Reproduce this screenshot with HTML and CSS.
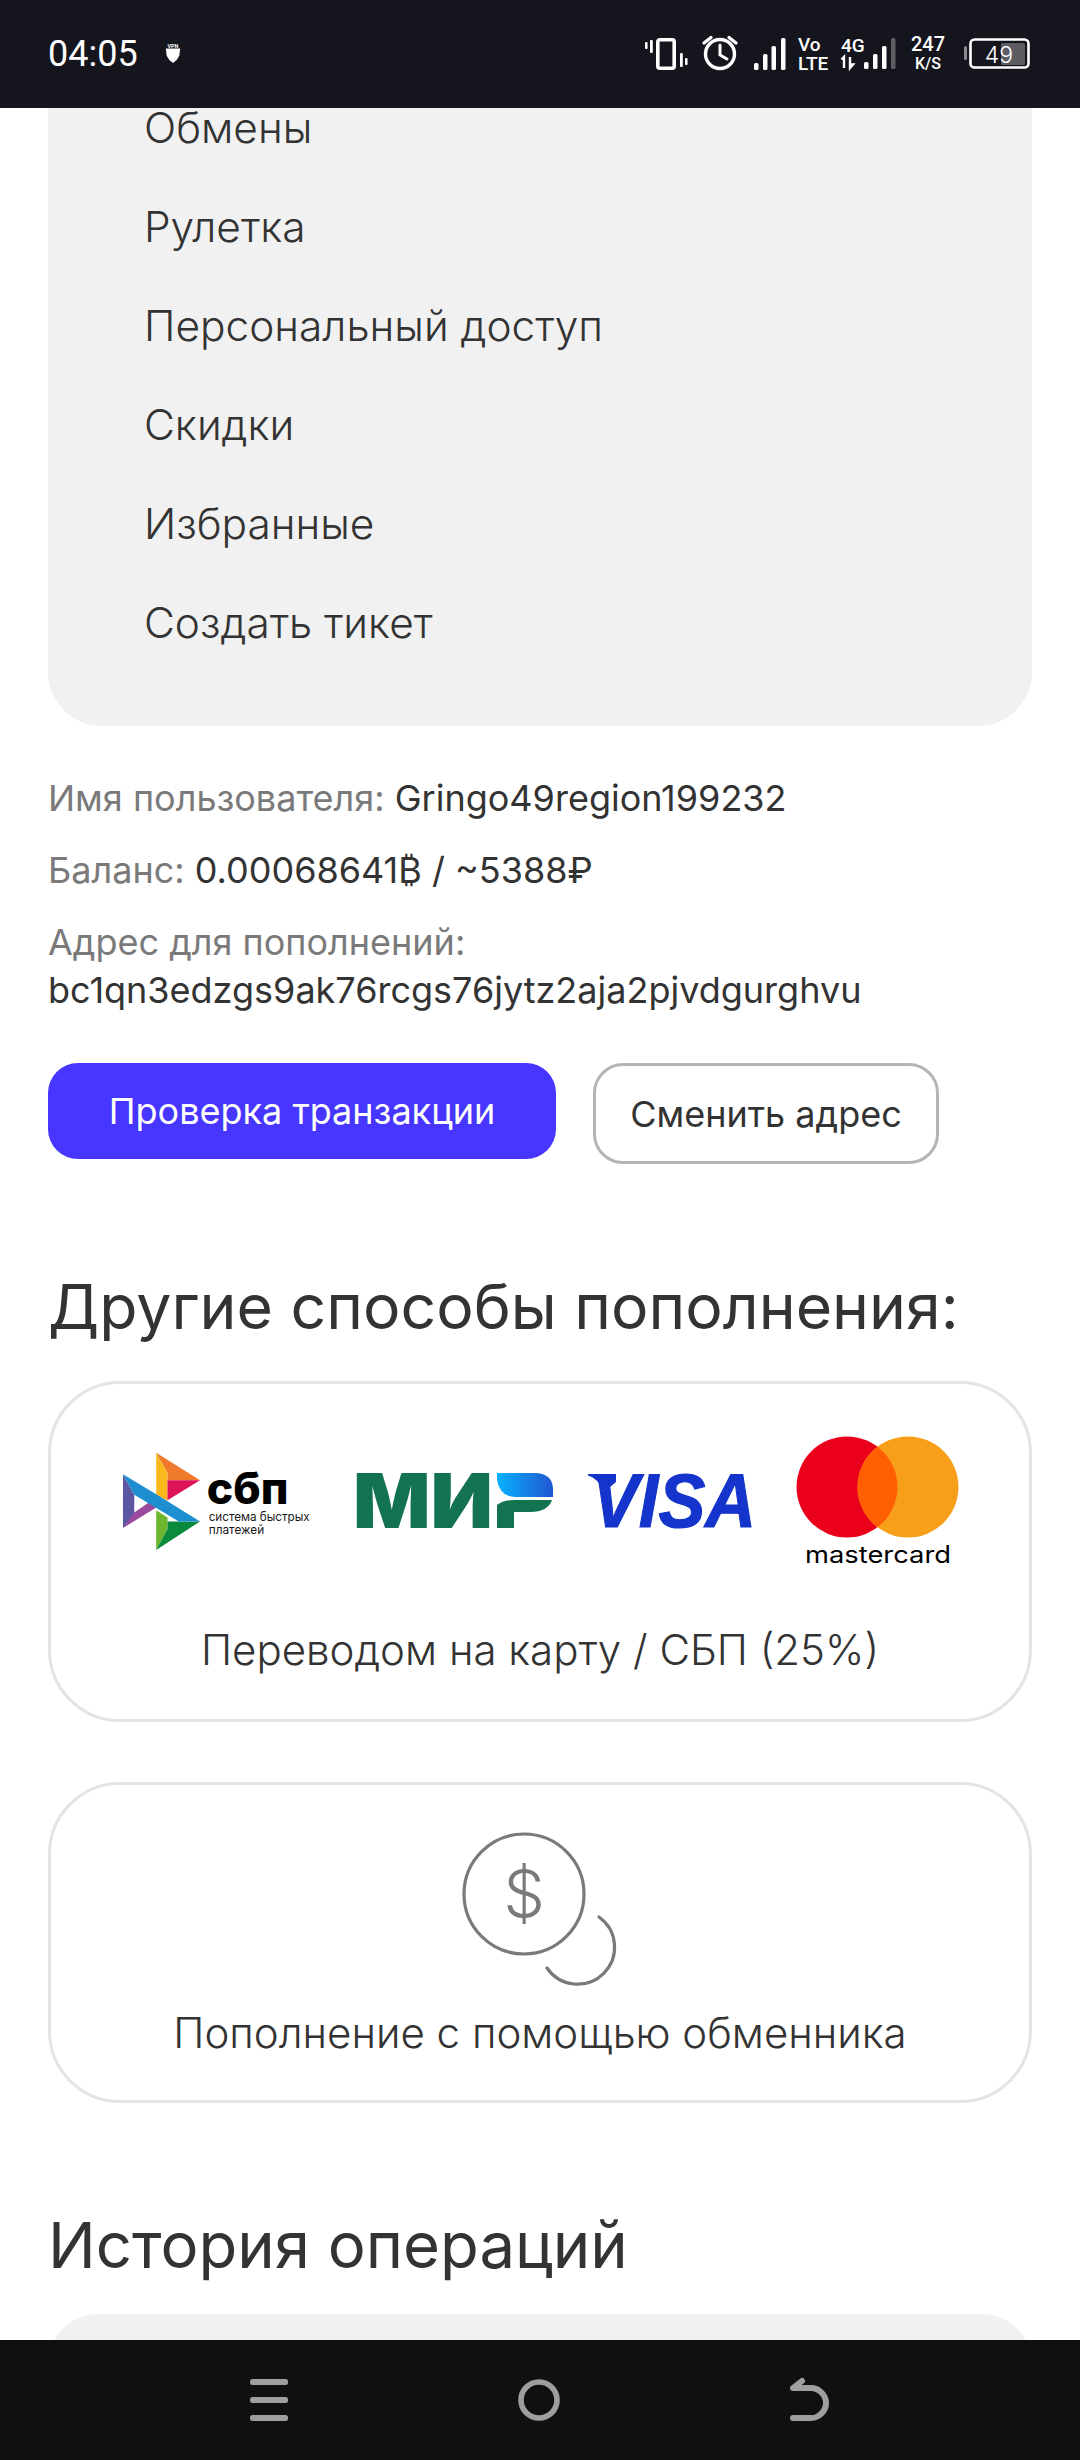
FILE: index.html
```html
<!DOCTYPE html>
<html lang="ru">
  <head>
    <meta charset="UTF-8" />
    <meta name="viewport" content="width=device-width, initial-scale=1.0" />
    <title>Профиль</title>
    <link rel="stylesheet" href="styles.css">
  </head>

  <body>
    <div class="screen">
      <header class="status-bar">
        <div class="status-left">
          <span class="time">04:05</span>
          <svg class="vpn" width="18" height="20" viewBox="0 0 20 22">
            <text x="10" y="5" text-anchor="middle" class="vpn-text">VPN</text>
            <path d="M2 6 L18 6 L17 14 Q15 19 10 22 Q5 19 3 14 Z" fill="#fff"/>
          </svg>
        </div>
        <div class="status-right">
          <svg width="44" height="34" viewBox="0 0 44 34" fill="#fff">
            <rect x="13.8" y="2.8" width="16.4" height="28.4" rx="2" fill="none" stroke="#fff" stroke-width="3.6"/>
            <rect x="1" y="5" width="2.6" height="7" rx="1"/>
            <rect x="6" y="3" width="2.8" height="13" rx="1"/>
            <rect x="36" y="16" width="2.8" height="14" rx="1"/>
            <rect x="41" y="21" width="2.6" height="7" rx="1"/>
          </svg>
          <svg class="ic-alarm" width="36" height="38" viewBox="0 0 36 38" fill="none" stroke="#fff" stroke-width="3.4" stroke-linecap="round">
            <circle cx="18" cy="20" r="14.5"/>
            <path d="M18 11 V21 L25 25" stroke-width="3"/>
            <path d="M2 9 L9 3.5 M34 9 L27 3.5"/>
          </svg>
          <svg class="ic-signal" width="32" height="32" viewBox="0 0 32 32" fill="#fff">
            <rect x="0" y="25" width="4.5" height="7" rx="1.5"/>
            <rect x="9" y="16" width="4.5" height="16" rx="1.5"/>
            <rect x="17.5" y="8" width="4.5" height="24" rx="1.5"/>
            <rect x="27" y="0" width="4.5" height="32" rx="1.5"/>
          </svg>
          <span class="stack stack-volte"><b>Vo</b><b>LTE</b></span>
          <svg class="ic-net" width="56" height="34" viewBox="0 0 56 34" fill="#fff">
            <text x="0" y="15" class="net-text">4G</text>
            <path d="M3 31 V20 L0.5 22.5 M9 20 V31 L12 27.5 H9" fill="none" stroke="#fff" stroke-width="2.4"/>
            <rect x="23" y="25" width="4.5" height="7" rx="1.5"/>
            <rect x="32" y="17" width="4.5" height="15" rx="1.5"/>
            <rect x="41" y="9" width="4.5" height="23" rx="1.5"/>
            <rect x="50" y="1" width="4.5" height="31" rx="1.5" fill="#5c5c62"/>
          </svg>
          <span class="stack stack-speed"><b>247</b><b class="small">K/S</b></span>
          <svg class="ic-battery" width="66" height="32" viewBox="0 0 66 32">
            <rect x="0" y="8" width="3" height="14" rx="1.5" fill="#8a8a8e"/>
            <rect x="6.5" y="1.5" width="58" height="28" rx="4" fill="none" stroke="#fff" stroke-width="2.6"/>
            <rect x="37" y="5" width="24" height="22" rx="1.5" fill="#5c5c62"/>
            <text x="35" y="25" text-anchor="middle" class="battery-text">49</text>
          </svg>
        </div>
      </header>

      <main class="content">
        <nav class="menu">
          <a class="menu-item">Обмены</a>
          <a class="menu-item">Рулетка</a>
          <a class="menu-item">Персональный доступ</a>
          <a class="menu-item">Скидки</a>
          <a class="menu-item">Избранные</a>
          <a class="menu-item">Создать тикет</a>
        </nav>

        <section class="info">
          <p><span class="muted">Имя пользователя:</span> Gringo49region199232</p>
          <p><span class="muted">Баланс:</span> 0.00068641₿ / ~5388₽</p>
          <p><span class="muted">Адрес для пополнений:</span><br />bc1qn3edzgs9ak76rcgs76jytz2aja2pjvdgurghvu</p>
        </section>

        <div class="actions">
          <button class="btn btn-primary">Проверка транзакции</button>
          <button class="btn btn-outline">Сменить адрес</button>
        </div>

        <h2 class="title title-topup">Другие способы пополнения:</h2>

        <section class="card card-cards">
          <div class="logos">
            <svg width="200" height="103" viewBox="90 150 600 310">
              <polygon points="198,155 232,215 232,300 198,282" fill="#fbb81e"/>
              <polygon points="198,155 330,238 232,238 232,215" fill="#ef7a2b"/>
              <polygon points="330,238 232,298 232,238" fill="#de1259"/>
              <polygon points="98,220 132,282 132,340 98,382" fill="#5b57a2"/>
              <polygon points="98,382 198,320 180,302 132,335" fill="#9a4a9e"/>
              <polygon points="198,328 232,350 232,385 198,448" fill="#6cb62f"/>
              <polygon points="198,448 330,362 232,362 232,385" fill="#0a8a3c"/>
              <polygon points="98,220 198,280 330,362 266,362 132,282" fill="#1d8fd0"/>
              <text x="350" y="310" textLength="246" lengthAdjust="spacingAndGlyphs" class="sbp-main">сбп</text>
              <text x="356" y="362" textLength="304" lengthAdjust="spacingAndGlyphs" class="sbp-sub">система быстрых</text>
              <text x="356" y="400" textLength="167" lengthAdjust="spacingAndGlyphs" class="sbp-sub">платежей</text>
            </svg>
            <svg width="210" height="60" viewBox="350 1472 210 60">
              <defs>
                <linearGradient id="mirBlue" x1="0" y1="0" x2="1" y2="0">
                  <stop offset="0" stop-color="#0ab2ff"/>
                  <stop offset="1" stop-color="#1f56d0"/>
                </linearGradient>
              </defs>
              <text x="353" y="1528" textLength="140" lengthAdjust="spacingAndGlyphs" class="mir-text">МИ</text>
              <path d="M497 1473 H534 Q553 1473 553 1490 V1497 H515 Q500 1497 497 1480 Z" fill="url(#mirBlue)"/>
              <path d="M497 1528 V1505 Q503 1500 514 1500 H552 Q548 1512 530 1512 H514 V1528 Z" fill="#137350"/>
            </svg>
            <svg width="175" height="60" viewBox="582 1472 175 60">
              <path d="M588 1474 H616 V1482 L604 1492 Q598 1478 588 1475.5 Z" fill="#1434cb"/>
              <text x="592" y="1527" textLength="164" lengthAdjust="spacingAndGlyphs" class="visa-text">VISA</text>
            </svg>
            <svg width="170" height="136" viewBox="790 1434 170 136">
              <circle cx="847" cy="1487" r="50.5" fill="#eb001b"/>
              <circle cx="908" cy="1487" r="50.5" fill="#f79e1b"/>
              <path d="M877.5 1446.8 A50.5 50.5 0 0 1 877.5 1527.2 A50.5 50.5 0 0 1 877.5 1446.8 Z" fill="#ff5f00"/>
              <text x="805" y="1563" textLength="146" lengthAdjust="spacingAndGlyphs" class="mc-text">mastercard</text>
            </svg>
          </div>
          <p class="card-label">Переводом на карту / СБП (25%)</p>
        </section>

        <section class="card card-exchange">
          <svg class="coin" width="200" height="170" viewBox="440 1825 200 170" fill="none" stroke="#7a7a7a" stroke-width="3.2" stroke-linecap="round">
            <circle cx="524" cy="1894" r="60"/>
            <path d="M599 1917 A37 37 0 1 1 547 1968"/>
            <text x="524" y="1917" text-anchor="middle" class="coin-text">$</text>
          </svg>
          <p class="card-label">Пополнение с помощью обменника</p>
        </section>

        <h2 class="title title-history">История операций</h2>
        <div class="history"></div>
      </main>

      <footer class="nav-bar">
        <svg width="38" height="42" viewBox="0 0 38 42" fill="#9e9e9e">
          <rect x="0" y="0" width="38" height="6" rx="2.5"/>
          <rect x="0" y="18" width="38" height="6" rx="2.5"/>
          <rect x="0" y="36" width="38" height="6" rx="2.5"/>
        </svg>
        <svg width="42" height="42" viewBox="0 0 42 42" fill="none" stroke="#9e9e9e" stroke-width="5.6">
          <circle cx="21" cy="21" r="18"/>
        </svg>
        <svg width="40" height="42" viewBox="0 0 40 42" fill="none" stroke="#9e9e9e" stroke-width="6" stroke-linecap="round" stroke-linejoin="round">
          <path d="M3 39 H21 C29 39 36 32 36 24 C36 16 29 9 21 9 H3 L12 2"/>
        </svg>
      </footer>
    </div>
  </body>
</html>
```

FILE: styles.css
```css
* {
  box-sizing: border-box;
}

body {
  margin: 0;
  background: #fff;
  font-family: "Inter", "Noto Sans", sans-serif;
  color: #333;
}

p,
h2 {
  margin: 0;
}

svg {
  overflow: visible;
}

.screen {
  display: flex;
  flex-direction: column;
  height: 2460px;
  overflow: hidden;
}

/* status bar */
.status-bar {
  display: flex;
  align-items: center;
  justify-content: space-between;
  flex: none;
  height: 108px;
  padding: 0 50px 0 48px;
  background: #14151d;
  color: #fff;
}

.status-left {
  display: flex;
  align-items: center;
  gap: 26px;
}

.time {
  font-family: "Roboto", sans-serif;
  font-size: 36px;
}

.vpn {
  margin-top: -2px;
}

.vpn-text {
  font-family: "Roboto", sans-serif;
  font-size: 6px;
  font-weight: 700;
  fill: #fff;
}

.status-right {
  display: flex;
  align-items: center;
}

.ic-alarm {
  margin-left: 14px;
  margin-top: -3px;
}

.ic-signal {
  margin-left: 16px;
}

.stack {
  display: flex;
  flex-direction: column;
  font-family: "Roboto", sans-serif;
  line-height: 19px;
}

.stack b {
  font-weight: 500;
}

.stack-volte {
  margin-left: 12px;
  width: 31px;
  font-size: 19px;
}

.ic-net {
  margin-left: 12px;
}

.stack-speed {
  margin-left: 13px;
  width: 36px;
  align-items: center;
  font-size: 20px;
}

.stack-speed .small {
  font-size: 16px;
}

.ic-battery {
  margin-left: 18px;
}

.net-text {
  font-family: "Roboto", sans-serif;
  font-size: 19px;
  font-weight: 500;
}

.battery-text {
  font-family: "Inter", sans-serif;
  font-size: 23px;
  font-weight: 300;
  fill: #fff;
}

/* page */
.content {
  flex: 1;
  min-height: 0;
  padding: 0 48px;
  overflow: hidden;
}

.menu {
  display: flex;
  flex-direction: column;
  margin-top: -30px;
  padding: 0 96px 54px;
  border-radius: 0 0 54px 54px;
  background: #f1f1f1;
}

.menu-item {
  font-size: 42.4px;
  font-weight: 350;
  line-height: 99px;
}

.info {
  display: flex;
  flex-direction: column;
  gap: 24px;
  margin-top: 48px;
  font-size: 36px;
  line-height: 48px;
}

.muted {
  color: #7a7a7a;
}

.actions {
  display: flex;
  align-items: flex-start;
  gap: 37px;
  margin-top: 49px;
}

.btn {
  font-family: inherit;
  font-size: 36px;
  border-radius: 30px;
}

.btn-primary {
  width: 508px;
  height: 96px;
  border: none;
  background: #4636ff;
  color: #fff;
}

.btn-outline {
  width: 346px;
  height: 101px;
  border: 3px solid #b5b5b5;
  background: #fff;
  color: #333;
}

.title {
  font-size: 62.5px;
  font-weight: 400;
  line-height: 72px;
}

.title-topup {
  margin-top: 106px;
}

.title-history {
  margin-top: 106px;
  font-size: 63.4px;
}

.card {
  display: flex;
  flex-direction: column;
  align-items: center;
  border: 3px solid #e4e4e4;
  border-radius: 72px;
}

.card-cards {
  margin-top: 39px;
  padding: 50px 0 41px;
}

.card-exchange {
  margin-top: 60px;
  padding: 40px 0 39px;
}

.logos {
  display: flex;
  align-items: center;
}

.logos svg:nth-child(2) {
  margin-left: 30px;
}

.logos svg:nth-child(3) {
  margin-left: 22px;
}

.logos svg:nth-child(4) {
  margin-left: 33px;
}

.card-label {
  font-size: 42px;
  font-weight: 350;
  line-height: 56px;
}

.card-cards .card-label {
  margin-top: 52px;
}

.card-exchange .card-label {
  margin-top: 10px;
}

.sbp-main {
  font-family: "Inter", sans-serif;
  font-size: 132px;
  font-weight: 800;
  fill: #000;
}

.sbp-sub {
  font-family: "Inter", sans-serif;
  font-size: 38px;
  fill: #1a1a1a;
}

.mir-text {
  font-family: "Inter", sans-serif;
  font-size: 76px;
  font-weight: 900;
  fill: #137350;
}

.visa-text {
  font-family: "Liberation Sans", sans-serif;
  font-size: 76px;
  font-weight: 700;
  font-style: italic;
  fill: #1434cb;
  stroke: #1434cb;
  stroke-width: 1.2px;
}

.mc-text {
  font-family: "Inter", sans-serif;
  font-size: 24px;
  font-weight: 400;
  fill: #000;
}

.coin-text {
  font-family: "Inter", sans-serif;
  font-size: 66px;
  font-weight: 300;
  fill: #7a7a7a;
  stroke: none;
}

.history {
  height: 100px;
  margin-top: 33px;
  border-radius: 54px;
  background: #f1f1f1;
}

/* navigation bar */
.nav-bar {
  display: flex;
  align-items: center;
  justify-content: center;
  gap: 230px;
  flex: none;
  height: 120px;
  background: #101010;
}
```
